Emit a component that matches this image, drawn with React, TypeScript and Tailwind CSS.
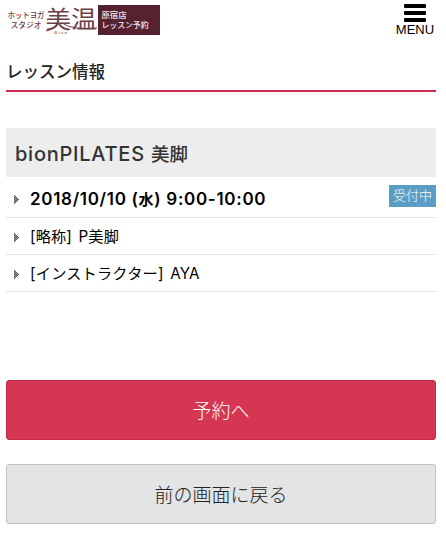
import React from 'react';

const Logo: React.FC = () => (
  <svg
    width="154"
    height="34"
    viewBox="0 -4 154 34"
    className="shrink-0 font-['Noto_Sans_CJK_JP',sans-serif] font-medium"
    role="img"
    aria-label="ホットヨガスタジオ美温 原宿店レッスン予約"
  >
    <g fill="#6b4048">
      <text x="1.5" y="13" fontSize="7.8" textLength="37" lengthAdjust="spacingAndGlyphs">ホットヨガ</text>
      <text x="4.5" y="22.5" fontSize="7.8" textLength="31" lengthAdjust="spacingAndGlyphs">スタジオ</text>
      <text x="39.5" y="22.5" fontSize="24" fontWeight="400" textLength="51" lengthAdjust="spacingAndGlyphs">美温</text>
      <text x="48" y="28.5" fontSize="5" fontStyle="italic" textLength="13" className="font-['Liberation_Serif',serif]">Bion</text>
    </g>
    <path d="M40 26 Q49 24 53 18 M56 18 Q65 25 91 23" fill="none" stroke="#6b4048" strokeWidth="1" />
    <rect x="92" y="0" width="62" height="30" fill="#57222f" />
    <g fill="#f2e8ea">
      <text x="95.5" y="13" fontSize="7.8" textLength="25" lengthAdjust="spacingAndGlyphs">原宿店</text>
      <text x="95.5" y="22.5" fontSize="7.8" textLength="47" lengthAdjust="spacingAndGlyphs">レッスン予約</text>
    </g>
  </svg>
);

const Marker: React.FC = () => (
  <svg width="5" height="9" viewBox="0 0 5 9" className="shrink-0" shapeRendering="crispEdges">
    <path d="M0 0.5h1M0 1.5h2M0 2.5h3M0 3.5h4M0 4.5h5M0 5.5h4M0 6.5h3M0 7.5h2M0 8.5h1" stroke="#999" />
    <path d="M0 0.5h1M1 1.5h1M0 2.5h1M2 2.5h1M1 3.5h1M3 3.5h1M0 4.5h1M2 4.5h1M4 4.5h1M1 5.5h1M3 5.5h1M0 6.5h1M2 6.5h1M1 7.5h1M0 8.5h1" stroke="#555" />
  </svg>
);

interface RowProps {
  children: React.ReactNode;
  badge?: string;
  className: string;
}

const Row: React.FC<RowProps> = ({ children, badge, className }) => (
  <li className={`flex items-center border-b border-[#e3e3e3] pl-2 ${className}`}>
    <Marker />
    <span className="ml-[11px] whitespace-nowrap">{children}</span>
    {badge && (
      <span className="mb-[7px] ml-auto flex h-[22px] w-[47px] items-center justify-center bg-[#5a9dc5] text-[13px] font-light tracking-normal text-white">
        {badge}
      </span>
    )}
  </li>
);

const App: React.FC = () => {
  return (
    <div className="h-[538px] w-[446px] overflow-hidden bg-white pl-[6px] pr-[10px] font-['Inter','Noto_Sans_CJK_JP',sans-serif] text-black">
      <header className="flex h-[50px] items-start justify-between">
        <div className="pt-[1px]">
          <Logo />
        </div>
        <button className="-mr-1 flex w-[50px] flex-col items-center pt-[4px]">
          <span className="flex w-[22px] flex-col gap-[3px]">
            <span className="h-[4px] rounded-[1px] bg-black" />
            <span className="h-[4px] rounded-[1px] bg-black" />
            <span className="h-[4px] rounded-[1px] bg-black" />
          </span>
          <span className="mt-[1px] font-['Liberation_Sans',sans-serif] text-[13px] leading-[14px]">MENU</span>
        </button>
      </header>

      <h1 className="h-[42px] border-b-2 border-[#d02a4c] pt-[10px] text-[16.5px] font-medium leading-6 text-[#222]">
        レッスン情報
      </h1>

      <h2 className="mt-9 flex h-[49px] items-center whitespace-nowrap bg-[#ededed] pl-[9px] pt-[2px] text-[20px] font-medium tracking-[0.75px] text-[#333]">
        <span>
          bionPILATES <span className="text-[18.5px] tracking-normal">美脚</span>
        </span>
      </h2>
      <ul className="text-[15.2px] [word-spacing:2px]">
        <Row badge="受付中" className="h-[41px] pt-[5px] text-[17px] font-semibold tracking-[0.7px] [word-spacing:0px]">
          2018/10/10 (<span className="text-[15px]">水</span>) 9:00-10:00
        </Row>
        <Row className="h-[37px] pt-[2px] tracking-[0.15px]">[略称] P美脚</Row>
        <Row className="h-[37px] pt-[2px] tracking-[0.2px]">[インストラクター] AYA</Row>
      </ul>

      <div className="mt-[88px] flex flex-col gap-6 text-[19px] font-light">
        <button className="h-[60px] rounded-[3px] border border-[#bf2b49] bg-[#d53753] pt-[4px] text-white">予約へ</button>
        <button className="h-[60px] rounded-[3px] border border-[#bfc3c6] bg-[#e2e4e6] pt-[4px] text-[#222]">前の画面に戻る</button>
      </div>
    </div>
  );
};

export default App;
